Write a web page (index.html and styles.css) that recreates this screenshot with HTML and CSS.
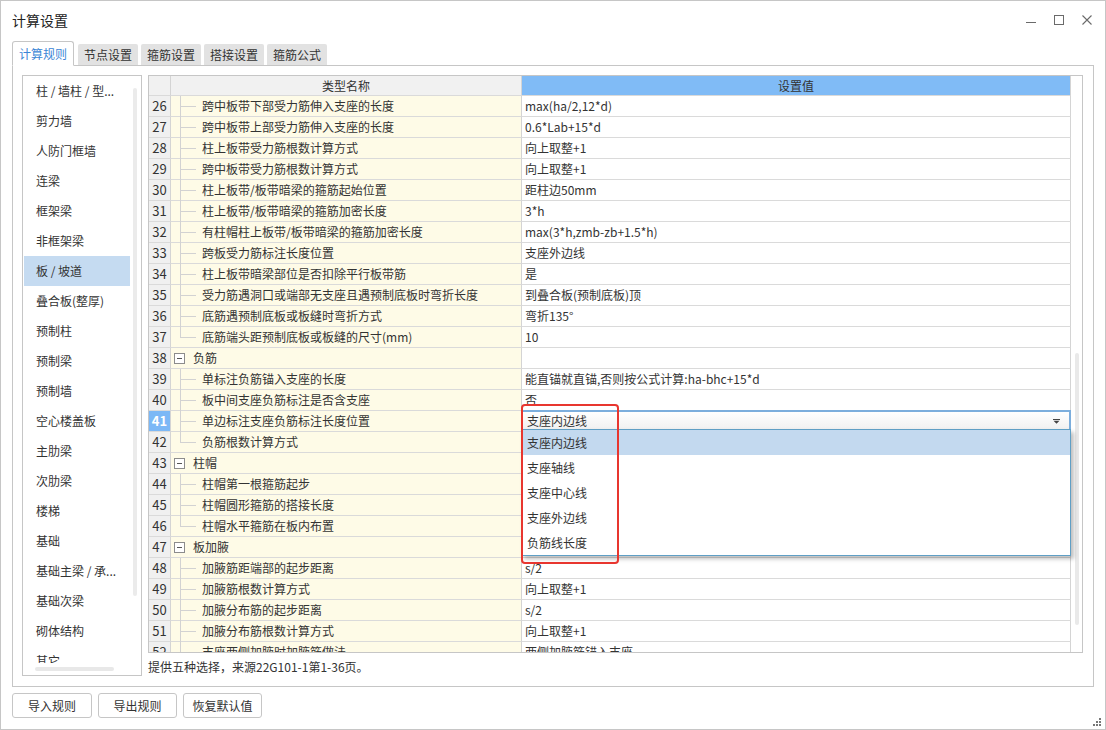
FILE: index.html
```html
<!DOCTYPE html>
<html lang="zh">
<head>
<meta charset="utf-8">
<title>计算设置</title>
<link rel="stylesheet" href="styles.css">
</head>
<body>
<div class="window">
  <div class="titlebar">
    <span class="title">计算设置</span>
    <div class="controls">
      <svg viewBox="0 0 10 10"><line x1="0" y1="7.5" x2="10" y2="7.5" stroke="#6a6a6a" stroke-width="1"/></svg>
      <svg viewBox="0 0 10 10"><rect x="0.5" y="0.5" width="9" height="9" fill="none" stroke="#6a6a6a" stroke-width="1"/></svg>
      <svg viewBox="0 0 10 10"><path d="M0.5 0.5 L9.5 9.5 M9.5 0.5 L0.5 9.5" stroke="#6a6a6a" stroke-width="1.1" fill="none"/></svg>
    </div>
  </div>

  <div class="tabs">
    <div class="tab active">计算规则</div>
    <div class="tab">节点设置</div>
    <div class="tab">箍筋设置</div>
    <div class="tab">搭接设置</div>
    <div class="tab">箍筋公式</div>
  </div>

  <div class="panel">
    <div class="sidebar">
      <div class="side-list">
        <div class="side-item">柱 / 墙柱 / 型...</div>
        <div class="side-item">剪力墙</div>
        <div class="side-item">人防门框墙</div>
        <div class="side-item">连梁</div>
        <div class="side-item">框架梁</div>
        <div class="side-item">非框架梁</div>
        <div class="side-item sel">板 / 坡道</div>
        <div class="side-item">叠合板(整厚)</div>
        <div class="side-item">预制柱</div>
        <div class="side-item">预制梁</div>
        <div class="side-item">预制墙</div>
        <div class="side-item">空心楼盖板</div>
        <div class="side-item">主肋梁</div>
        <div class="side-item">次肋梁</div>
        <div class="side-item">楼梯</div>
        <div class="side-item">基础</div>
        <div class="side-item">基础主梁 / 承...</div>
        <div class="side-item">基础次梁</div>
        <div class="side-item">砌体结构</div>
        <div class="side-item">其它</div>
      </div>
      <div class="vscroll"><div class="vthumb"></div></div>
      <div class="hscroll"><div class="hthumb"></div></div>
    </div>

    <div class="main">
      <div class="grid">
        <div class="grid-body">
          <div class="row head">
            <div class="num"></div>
            <div class="hname">类型名称</div>
            <div class="hval">设置值</div>
          </div>
          <div class="row"><div class="num">26</div><div class="name child">跨中板带下部受力筋伸入支座的长度</div><div class="val">max(ha/2,12*d)</div></div>
          <div class="row"><div class="num">27</div><div class="name child">跨中板带上部受力筋伸入支座的长度</div><div class="val">0.6*Lab+15*d</div></div>
          <div class="row"><div class="num">28</div><div class="name child">柱上板带受力筋根数计算方式</div><div class="val">向上取整+1</div></div>
          <div class="row"><div class="num">29</div><div class="name child">跨中板带受力筋根数计算方式</div><div class="val">向上取整+1</div></div>
          <div class="row"><div class="num">30</div><div class="name child">柱上板带/板带暗梁的箍筋起始位置</div><div class="val">距柱边50mm</div></div>
          <div class="row"><div class="num">31</div><div class="name child">柱上板带/板带暗梁的箍筋加密长度</div><div class="val">3*h</div></div>
          <div class="row"><div class="num">32</div><div class="name child">有柱帽柱上板带/板带暗梁的箍筋加密长度</div><div class="val">max(3*h,zmb-zb+1.5*h)</div></div>
          <div class="row"><div class="num">33</div><div class="name child">跨板受力筋标注长度位置</div><div class="val">支座外边线</div></div>
          <div class="row"><div class="num">34</div><div class="name child">柱上板带暗梁部位是否扣除平行板带筋</div><div class="val">是</div></div>
          <div class="row"><div class="num">35</div><div class="name child">受力筋遇洞口或端部无支座且遇预制底板时弯折长度</div><div class="val">到叠合板(预制底板)顶</div></div>
          <div class="row"><div class="num">36</div><div class="name child">底筋遇预制底板或板缝时弯折方式</div><div class="val">弯折135°</div></div>
          <div class="row"><div class="num">37</div><div class="name child last">底筋端头距预制底板或板缝的尺寸(mm)</div><div class="val">10</div></div>
          <div class="row"><div class="num">38</div><div class="name group"><span class="toggle"></span>负筋</div><div class="val"></div></div>
          <div class="row"><div class="num">39</div><div class="name child">单标注负筋锚入支座的长度</div><div class="val">能直锚就直锚,否则按公式计算:ha-bhc+15*d</div></div>
          <div class="row"><div class="num">40</div><div class="name child">板中间支座负筋标注是否含支座</div><div class="val">否</div></div>
          <div class="row"><div class="num cur">41</div><div class="name child">单边标注支座负筋标注长度位置</div><div class="val"></div></div>
          <div class="row"><div class="num">42</div><div class="name child last">负筋根数计算方式</div><div class="val"></div></div>
          <div class="row"><div class="num">43</div><div class="name group"><span class="toggle"></span>柱帽</div><div class="val"></div></div>
          <div class="row"><div class="num">44</div><div class="name child">柱帽第一根箍筋起步</div><div class="val"></div></div>
          <div class="row"><div class="num">45</div><div class="name child">柱帽圆形箍筋的搭接长度</div><div class="val"></div></div>
          <div class="row"><div class="num">46</div><div class="name child last">柱帽水平箍筋在板内布置</div><div class="val"></div></div>
          <div class="row"><div class="num">47</div><div class="name group"><span class="toggle"></span>板加腋</div><div class="val"></div></div>
          <div class="row"><div class="num">48</div><div class="name child">加腋筋距端部的起步距离</div><div class="val">s/2</div></div>
          <div class="row"><div class="num">49</div><div class="name child">加腋筋根数计算方式</div><div class="val">向上取整+1</div></div>
          <div class="row"><div class="num">50</div><div class="name child">加腋分布筋的起步距离</div><div class="val">s/2</div></div>
          <div class="row"><div class="num">51</div><div class="name child">加腋分布筋根数计算方式</div><div class="val">向上取整+1</div></div>
          <div class="row"><div class="num">52</div><div class="name child">支座两侧加腋时加腋筋做法</div><div class="val">两侧加腋筋锚入支座</div></div>
        </div>
        <div class="grid-scroll"><div class="gthumb"></div></div>

        <div class="combo">
          <span>支座内边线</span>
          <svg class="arrow" viewBox="0 0 7 5"><path d="M0 0.5 H7" stroke="#444" stroke-width="1"/><path d="M0.5 1.8 H6.5 L3.5 4.8 Z" fill="#444"/></svg>
        </div>
        <div class="droplist">
          <div class="opt sel">支座内边线</div>
          <div class="opt">支座轴线</div>
          <div class="opt">支座中心线</div>
          <div class="opt">支座外边线</div>
          <div class="opt">负筋线长度</div>
        </div>
        <div class="redbox"></div>
      </div>
      <div class="status">提供五种选择，来源22G101-1第1-36页。</div>
    </div>
  </div>

  <div class="buttons">
    <div class="btn">导入规则</div>
    <div class="btn">导出规则</div>
    <div class="btn">恢复默认值</div>
  </div>

  <svg class="grip" viewBox="0 0 9 9">
    <rect x="6" y="0" width="2" height="2" fill="#777"/>
    <rect x="3" y="3" width="2" height="2" fill="#777"/>
    <rect x="6" y="3" width="2" height="2" fill="#777"/>
    <rect x="0" y="6" width="2" height="2" fill="#777"/>
    <rect x="3" y="6" width="2" height="2" fill="#777"/>
    <rect x="6" y="6" width="2" height="2" fill="#777"/>
  </svg>
</div>
</body>
</html>
```

FILE: styles.css
```css
* { box-sizing: border-box; }
html, body { margin: 0; padding: 0; }
body {
  font-family: "Noto Sans CJK SC", "Microsoft YaHei", sans-serif;
  font-size: 12px;
  color: #333;
  background: #fff;
}

.window {
  position: relative;
  width: 1106px;
  height: 730px;
  border: 1px solid #c6c6c6;
  background: #fff;
  display: flex;
  flex-direction: column;
  overflow: hidden;
}

/* title bar */
.titlebar {
  height: 40px;
  flex: none;
  display: flex;
  align-items: center;
  justify-content: space-between;
  padding: 0 13px 2px 11px;
}
.title { font-size: 14px; color: #222; line-height: 20px; }
.controls { display: flex; gap: 18px; align-items: center; }
.controls svg { display: block; width: 10px; height: 10px; }

/* tabs */
.tabs {
  position: relative;
  z-index: 1;
  flex: none;
  height: 24px;
  display: flex;
  align-items: flex-end;
  gap: 3px;
  padding-left: 11px;
}
.tab {
  height: 21px;
  line-height: 21px;
  padding: 0 6px;
  background: #e2e2e2;
  color: #333;
  border-radius: 2px 2px 0 0;
}
.tab.active {
  height: 25px;
  line-height: 23px;
  margin-bottom: -1px;
  background: #fff;
  color: #3b86d6;
  border: 1px solid #c6c6c6;
  border-bottom-color: #fff;
  border-radius: 3px 3px 0 0;
  margin-right: 1px;
}

/* main panel */
.panel {
  flex: none;
  margin-left: 11px;
  width: 1082px;
  height: 622px;
  border: 1px solid #c6c6c6;
  display: flex;
  gap: 6px;
  padding: 9px 10px 9px 9px;
}

/* sidebar */
.sidebar {
  width: 120px;
  height: 601px;
  border: 1px solid #c6c6c6;
  display: grid;
  grid-template-columns: 107px 11px;
  grid-template-rows: 587px 12px;
}
.side-list { overflow: hidden; padding-left: 1px; }
.side-item {
  height: 30px;
  line-height: 30px;
  padding-left: 12px;
  white-space: nowrap;
  color: #333;
}
.side-item.sel { background: #c5dbf1; }
.vscroll { grid-column: 2; grid-row: 1; }
.vthumb {
  margin: 12px 0 0 3px;
  width: 4px;
  height: 508px;
  border-radius: 2px;
  background: #ebebeb;
}
.hscroll { grid-column: 1; grid-row: 2; }
.hthumb {
  margin: 4px 0 0 12px;
  width: 79px;
  height: 4px;
  border-radius: 2px;
  background: #e8e8e8;
}

/* grid */
.main { width: 935px; display: flex; flex-direction: column; }
.grid {
  position: relative;
  height: 578px;
  border: 1px solid #c6c6c6;
  display: flex;
}
.grid-body { width: 922px; overflow: hidden; }
.grid-scroll { width: 11px; }
.gthumb {
  margin: 277px 0 0 4px;
  width: 4px;
  height: 272px;
  border-radius: 2px;
  background: #e9e9e9;
}

.row {
  display: grid;
  grid-template-columns: 22px 351px 549px;
  height: 21px;
}
.row > div {
  border-right: 1px solid #d4d4d4;
  border-bottom: 1px solid #dadada;
  line-height: 20px;
  white-space: nowrap;
  overflow: hidden;
}
.row.head { height: 20px; }
.row.head > div {
  line-height: 19px;
  text-align: center;
  background: #f1f1f1;
  color: #333;
}
.row.head > .hval { background: #80bbf6; }

.num {
  background: #f0f0f0;
  text-align: center;
  font-size: 13px;
  color: #333;
}
.num.cur { background: #7cb8f6; color: #fff; font-weight: bold; }

.row > .name {
  position: relative;
  overflow: visible;
  background: #fefbe7;
  padding-left: 31px;
}
.name.child::before {
  content: "";
  position: absolute;
  left: 9px;
  top: 0;
  bottom: -1px;
  width: 1px;
  background: #d2d2d2;
}
.name.child.last::before { bottom: auto; height: 10px; }
.name.child::after {
  content: "";
  position: absolute;
  left: 9px;
  top: 10px;
  width: 16px;
  height: 1px;
  background: #d2d2d2;
}
.row > .name.group {
  display: flex;
  align-items: center;
  padding-left: 3px;
}
.toggle {
  position: relative;
  width: 11px;
  height: 11px;
  border: 1px solid #8c8c8c;
  background: #fff;
  margin-right: 8px;
  flex: none;
}
.toggle::after {
  content: "";
  position: absolute;
  left: 2px;
  top: 4px;
  width: 5px;
  height: 1px;
  background: #555;
}
.val { padding-left: 3px; background: #fff; }

/* dropdown editor */
.combo {
  position: absolute;
  left: 372px;
  top: 334px;
  width: 550px;
  height: 20px;
  border: 2px solid #7caedd;
  border-bottom-width: 1px;
  background: linear-gradient(#ffffff, #f1f1f1);
  padding-left: 4px;
  line-height: 17px;
  color: #333;
  z-index: 2;
}
.combo .arrow {
  position: absolute;
  right: 9px;
  top: 7px;
  width: 7px;
  height: 5px;
}
.droplist {
  position: absolute;
  left: 372px;
  top: 353px;
  width: 550px;
  height: 127px;
  border: 1px solid #5f9fc5;
  background: #fff;
  box-shadow: 3px 3px 4px rgba(0, 0, 0, 0.25);
  z-index: 2;
}
.opt {
  height: 25px;
  line-height: 25px;
  padding-left: 5px;
  color: #333;
}
.opt.sel { background: #c3d9ef; }
.redbox {
  position: absolute;
  left: 372px;
  top: 328px;
  width: 98px;
  height: 160px;
  border: 2px solid #e8362f;
  border-radius: 4px;
  z-index: 3;
}

.status {
  padding-top: 6px;
  line-height: 16px;
  color: #333;
}

/* buttons */
.buttons {
  flex: none;
  display: flex;
  gap: 6px;
  margin: 6px 0 0 11px;
}
.btn {
  width: 80px;
  height: 25px;
  line-height: 23px;
  text-align: center;
  border: 1px solid #c6c6c6;
  border-radius: 3px;
  background: #fff;
  color: #333;
}
.btn + .btn { width: 79px; }

.grip {
  position: absolute;
  right: 3px;
  bottom: 2px;
  width: 9px;
  height: 9px;
}
```
